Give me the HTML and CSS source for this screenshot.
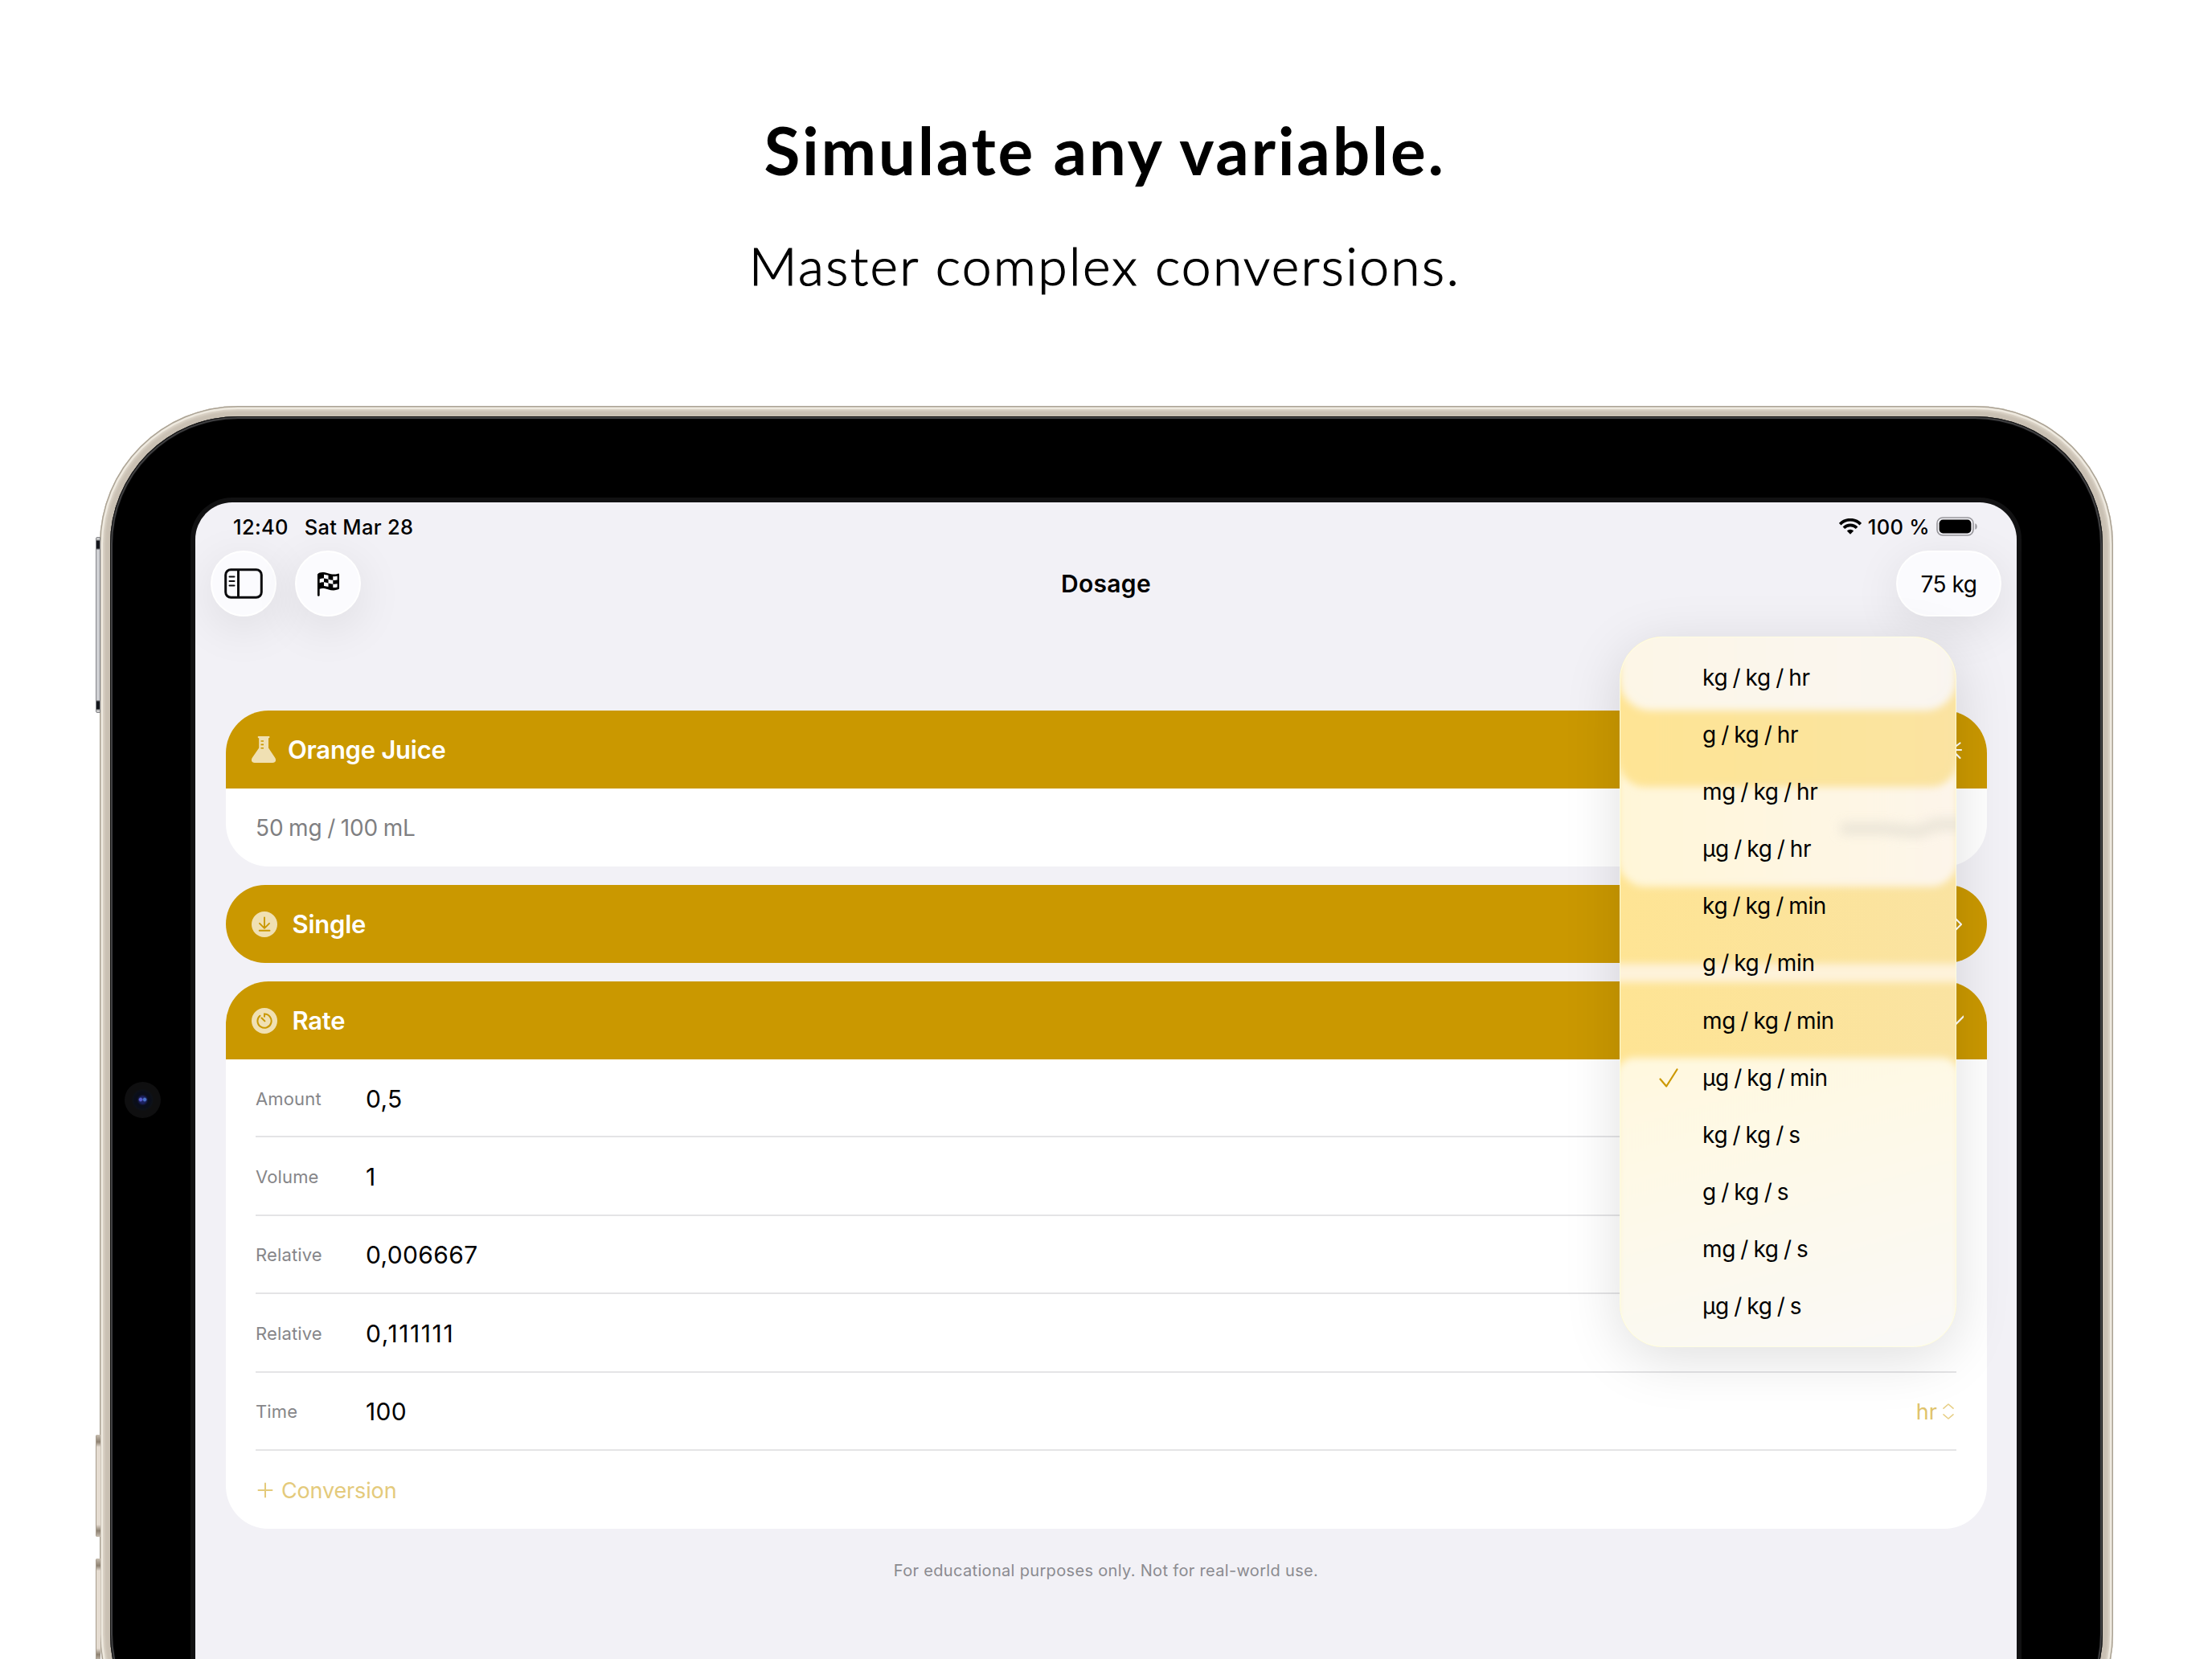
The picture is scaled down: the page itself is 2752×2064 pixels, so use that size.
FILE: index.html
```html
<!DOCTYPE html>
<html lang="en">
<head>
<meta charset="utf-8">
<title>Dosage</title>
<link rel="stylesheet" href="styles.css">
</head>
<body>
<header class="hero">
  <h1 class="hero-title">Simulate any variable.</h1>
  <p class="hero-sub">Master complex conversions.</p>
</header>

<main class="device">
  <span class="side-button power"></span>
  <span class="side-button volume-up"></span>
  <span class="side-button volume-down"></span>
  <span class="camera"></span>
  <div class="bezel">
    <div class="screen">
      <div class="statusbar">
        <span class="clock">12:40</span>
        <span class="date">Sat Mar 28</span>
        <svg class="wifi" viewBox="0 0 28 20" fill="none" stroke="#000" stroke-width="3.7"><path d="M1.2 7.2a17.6 17.6 0 0 1 25.6 0"/><path d="M5.900 11.700a11.300 11.300 0 0 1 16.200 0"/><path d="M14 19.800l-4.200-4.300a6 6 0 0 1 8.400 0z" fill="#000" stroke="none"/></svg>
        <span class="percent">100 %</span>
        <svg class="battery" viewBox="0 0 52 24"><rect x="1" y="1" width="45" height="22" rx="7" fill="none" stroke="#98979c" stroke-width="1.6"/><rect x="3.6" y="3.6" width="39.8" height="16.8" rx="4.6"/><path d="M48.4 8.200c3 1 3 6.600 0 7.600z" fill="#98979c"/></svg>
      </div>
      <nav class="toolbar">
        <button class="glass round"><svg class="i-sidebar" viewBox="0 0 48 38" fill="none" stroke="#0c0c0e" stroke-width="3"><rect x="1.700" y="1.700" width="44.600" height="34.600" rx="6.500"/><path d="M17.500 2v34"/><path d="M6.500 10.500h6M6.500 16h6M6.500 21.500h6" stroke-width="2" stroke-linecap="round"/></svg></button>
        <button class="glass round"><svg class="i-flag" viewBox="0 0 30 32"><path d="M1 3.500C4 .2 9 .5 14.500 2.300c5 1.600 9 1.700 13 .4q1.500-.3 1.500 1.300v17.200c0 1-.4 1.500-1.300 1.900-4 1.700-8.500 1.400-13.200-.1-4.500-1.400-8-1.700-10.700-.6V30.500q0 1.400-1.400 1.400T1 30.500z"/><g fill="#fbfbfe"><path d="M9.300 3.800q3 .3 5.700 1.200v5q-2.700-.9-5.700-1.200zM21 6.300q3 .3 5.500-.4v5q-2.500.6-5.500.3zM3.800 9.700q2.500-1.200 5.500-.9v5q-3-.3-5.500.8zM15 10q3 1 6 1.200v5q-3-.3-6-1.200zM9.300 13.800q3 .3 5.700 1.200v4.600q-2.700-.8-5.700-1.100zM21 16.200q3 .3 5.500-.4v4.300q-2.500.8-5.500.6z"/></g></svg></button>
        <h2 class="nav-title">Dosage</h2>
        <button class="glass weight">75 kg</button>
      </nav>

      <div class="content">
        <section class="card">
          <div class="card-head flask">
            <svg class="i-flask" viewBox="0 0 30 33"><path fill="#f0e0b3" d="M8.500 0h13.200q.8 0 .8 1t-.8 1.300H21V14.500l8.200 12.300c2 3.200.6 6.200-3 6.200H3.800c-3.600 0-5-3-3-6.200L9.200 14.500V2.300h-.7Q7.700 2 7.700 1t.8-1z"/><path d="M11.500 6h3.500M11.500 10.400h3.500M11.500 14.800h3.500" stroke="#ca9800" stroke-width="1.600"/></svg>
            <span>Orange Juice</span>
            <svg class="i-end" viewBox="0 0 32 32" fill="none" stroke="#fff" stroke-width="2.200" stroke-linecap="round"><path d="M16 3v6M16 23v6M3 16h6M23 16h6M6.800 6.800l4.200 4.200M21 19.500l6.500 6.500M27.500 7.500L21 12.500M11 21l-4.200 4.200"/></svg>
          </div>
          <div class="summary">50 mg / 100 mL</div>
        </section>

        <section class="card single">
          <div class="card-head">
            <svg class="i-round" viewBox="0 0 32 32" fill="none" stroke="#ca9800" stroke-width="1.900" stroke-linecap="round" stroke-linejoin="round"><circle cx="16" cy="16" r="16" fill="#f0e0b3" stroke="none"/><path d="M16 7.500v12.800M10 14.800l6 6 6-6M9.700 23.700h12.800"/></svg>
            <span>Single</span>
            <svg class="i-end" viewBox="0 0 32 32" fill="none" stroke="#fff" stroke-width="2.200" stroke-linecap="round" stroke-linejoin="round"><path d="M19.500 6.500l9.500 9.500-9.500 9.500"/></svg>
          </div>
        </section>

        <section class="card">
          <div class="card-head">
            <svg class="i-round" viewBox="0 0 32 32" fill="none" stroke="#ca9800" stroke-width="2" stroke-linecap="round"><circle cx="16" cy="16" r="16" fill="#f0e0b3" stroke="none"/><path d="M16 10.800V7.600a8.600 8.600 0 1 1-5.600 2.100M12.500 12.500l3.900 3.900"/></svg>
            <span>Rate</span>
            <svg class="i-end" viewBox="0 0 32 32" fill="none" stroke="#fff" stroke-width="2.200" stroke-linecap="round" stroke-linejoin="round"><path d="M10 10.500l11 11 11-11"/></svg>
          </div>
          <div class="rows">
            <div class="row"><span class="label">Amount</span><span class="value">0,5</span></div>
            <div class="row"><span class="label">Volume</span><span class="value">1</span></div>
            <div class="row"><span class="label">Relative</span><span class="value">0,006667</span></div>
            <div class="row"><span class="label">Relative</span><span class="value wide">0,111111</span></div>
            <div class="row"><span class="label">Time</span><span class="value">100</span><span class="unit">hr</span><svg class="i-updown" viewBox="0 0 16 22" fill="none" stroke="#e7cf86" stroke-width="1.600" stroke-linecap="round" stroke-linejoin="round"><path d="M2 7.200L8 2l6 5.200M2 14.800L8 20l6-5.200"/></svg></div>
            <div class="row add"><svg class="i-plus" viewBox="0 0 20 20" stroke="#e4ca7b" stroke-width="2" stroke-linecap="round"><path d="M1.500 10h17M10 1.500v17"/></svg><span>Conversion</span></div>
          </div>
        </section>
        <p class="footnote">For educational purposes only. Not for real-world use.</p>
      </div>

      <div class="menu">
        <svg class="menu-glass" viewBox="0 0 419 884" preserveAspectRatio="none">
          <defs>
            <filter id="soft" filterUnits="userSpaceOnUse" x="-60" y="-80" width="540" height="1100"><feGaussianBlur stdDeviation="5"/></filter>
            <filter id="smudge" filterUnits="userSpaceOnUse" x="200" y="180" width="260" height="120"><feGaussianBlur stdDeviation="7 6"/></filter>
            <linearGradient id="gold" x1="0" x2="1"><stop offset="0" stop-color="#fee494"/><stop offset="1" stop-color="#fae3a1"/></linearGradient>
            <linearGradient id="cream" x1="0" x2="1"><stop offset="0" stop-color="#fdf6e6"/><stop offset=".5" stop-color="#fbf6ec"/><stop offset="1" stop-color="#f9f5f0"/></linearGradient>
            <linearGradient id="pale" x1="0" x2="1"><stop offset="0" stop-color="#fff6d8"/><stop offset="1" stop-color="#fdf5ea"/></linearGradient>
            <linearGradient id="fade" x1="0" y1="0" x2=".3" y2="1"><stop offset="0" stop-color="#fff8de"/><stop offset=".5" stop-color="#fdf9ea"/><stop offset="1" stop-color="#faf9f6"/></linearGradient>
          </defs>
          <rect width="419" height="884" fill="url(#gold)"/>
          <rect x="-2" y="140" width="423" height="171" rx="34" fill="url(#pale)" filter="url(#soft)"/>
          <rect x="-2" y="40" width="423" height="147" rx="34" fill="url(#gold)" filter="url(#soft)"/>
          <rect x="0" y="-40" width="419" height="132" rx="38" fill="url(#cream)" filter="url(#soft)"/>
          <rect x="-20" y="407" width="459" height="23" fill="#fef3da" filter="url(#soft)"/>
          <rect x="-4" y="524" width="427" height="420" rx="22" fill="url(#fade)" filter="url(#soft)"/>
          <path d="M275 239h55l30 3h14l20-8h50" stroke="#e6e1d4" stroke-width="18" opacity=".65" fill="none" filter="url(#smudge)"/>
        </svg>
        <ul class="menu-list">
          <li>kg / kg / hr</li>
          <li>g / kg / hr</li>
          <li>mg / kg / hr</li>
          <li>µg / kg / hr</li>
          <li>kg / kg / min</li>
          <li>g / kg / min</li>
          <li>mg / kg / min</li>
          <li class="checked"><svg class="i-check" viewBox="0 0 24 24" fill="none" stroke="#cc9800" stroke-width="2.200" stroke-linecap="round" stroke-linejoin="round"><path d="M1.500 13.500L9.200 22.500 22.500 1.500"/></svg>µg / kg / min</li>
          <li>kg / kg / s</li>
          <li>g / kg / s</li>
          <li>mg / kg / s</li>
          <li>µg / kg / s</li>
        </ul>
      </div>
    </div>
  </div>
</main>
</body>
</html>
```
FILE: styles.css
```css
* { box-sizing: border-box; }

html { overflow: hidden; }

body {
  margin: 0;
  width: 2752px;
  height: 2064px;
  overflow: hidden;
  position: relative;
  background: #fff;
  color: #000;
  font-family: Inter, "Liberation Sans", sans-serif;
}

h1, h2, p, ul { margin: 0; padding: 0; }
button { border: 0; padding: 0; font: inherit; color: inherit; }
svg { display: block; flex: none; }

.hero {
  height: 505px;
  padding: 136px 3px 0 0;
  text-align: center;
  font-family: Lato, "Open Sans", sans-serif;
}
.hero-title { font-size: 82px; line-height: 100px; font-weight: 700; letter-spacing: 2.700px; }
.hero-sub {
  margin-top: 44px;
  font-size: 66px;
  line-height: 100px;
  font-weight: 300;
  letter-spacing: 2.350px;
  -webkit-text-stroke: 1.200px #000;
}

/* Tablet body */
.device {
  position: relative;
  width: 2505px;
  height: 1700px;
  margin-left: 124px;
  padding: 13px;
  border-radius: 172px;
  background: #c9c0b3;
  box-shadow: inset 0 0 0 1.500px #aaa294, inset 0 0 0 4px #eee9df, inset 0 0 3px 6px #ddd5c9;
}
.bezel {
  height: 100%;
  padding: 107px 107px 107px 106px;
  border-radius: 159px;
  background: #000;
  box-shadow: inset 0 0 0 1px #111, inset 0 0 1px 3px #444446;
}
.side-button {
  position: absolute;
  left: -5px;
  width: 6px;
  border-radius: 2px 0 0 2px;
  border-left: 1px solid #a79c8d;
  background: linear-gradient(#c9bfb2, #8d8171 7%, #e5dcd1 12%, #e5dcd1 88%, #8d8171 94%, #c9bfb2);
}
.power {
  top: 163px;
  height: 219px;
  border: 1px solid #85868a;
  background: linear-gradient(#ccc 1%, #15171c 2% 6%, #cfd0d3 7%, #cfd0d3 93%, #15171c 94% 98%, #ccc 99%);
}
.volume-up { top: 1280px; height: 127px; }
.volume-down { top: 1434px; height: 127px; }
.camera {
  position: absolute;
  left: 31px;
  top: 841px;
  width: 45px;
  height: 45px;
  border-radius: 50%;
  background:
    radial-gradient(circle at 20px 22px, #5a5fd0 0 1.500px, transparent 3px),
    radial-gradient(circle at 25px 22px, #4a74cc 0 1.500px, transparent 3px),
    radial-gradient(circle, #1c2160 0 4px, #0a0e1a 7px 10px, #0d1118 12px, #0f0f10 14px);
}
.screen {
  position: relative;
  height: 1500px;
  border-radius: 46px;
  background: #f2f1f6;
  box-shadow: 0 0 0 6px #111112;
}

/* Status bar */
.statusbar {
  display: flex;
  align-items: center;
  height: 60px;
  padding: 0 48px 0 47px;
  font-size: 25.500px;
  font-weight: 500;
  letter-spacing: .3px;
}
.date { margin-left: 20px; }
.wifi { width: 28px; height: 20px; margin-left: auto; }
.percent { margin: 0 8px; }
.battery { width: 52px; height: 24px; }

/* Toolbar */
.toolbar {
  display: flex;
  align-items: center;
  gap: 23px;
  height: 82px;
  padding: 0 19px;
}
.glass {
  display: flex;
  align-items: center;
  justify-content: center;
  height: 82px;
  background: #fbfbfe;
  border: 2px solid #fff;
  border-radius: 41px;
  box-shadow: 0 14px 60px rgba(0, 0, 0, .09);
}
.round { width: 82px; }
.i-sidebar { width: 48px; height: 38px; }
.i-flag { width: 29px; height: 31px; }
.nav-title { flex: 1; padding-right: 56px; text-align: center; font-size: 30px; font-weight: 600; letter-spacing: .3px; }
.weight { width: 131px; padding-top: 1px; font-size: 28px; letter-spacing: -.5px; }

/* Cards */
.content {
  display: flex;
  flex-direction: column;
  gap: 23px;
  padding: 117px 37.500px 0;
}
.card { overflow: hidden; border-radius: 53px; background: #fff; }
.single { border-radius: 49px; }
.card-head {
  display: flex;
  align-items: center;
  gap: 18.500px;
  height: 97px;
  padding: 0 29px 0 32.500px;
  background: #ca9800;
  color: #fff;
  font-size: 31px;
  font-weight: 600;
  letter-spacing: -.25px;
}
.flask { gap: 15px; }
.i-flask { width: 30px; height: 33px; }
.i-round { width: 32px; height: 32px; }
.i-end { width: 32px; height: 32px; margin-left: auto; }
.summary {
  display: flex;
  align-items: center;
  height: 97px;
  padding-left: 37.500px;
  color: #7f7f82;
  font-size: 28px;
  letter-spacing: -.1px;
  word-spacing: -1.200px;
}
.rows { padding: 0 37.500px; }
.row {
  display: flex;
  align-items: center;
  height: 97.400px;
  padding-top: 2px;
  border-bottom: 2px solid #e4e4e6;
}
.label { width: 137px; color: #868689; font-size: 22px; letter-spacing: .15px; }
.value { font-size: 30px; letter-spacing: .35px; }
.value.wide { letter-spacing: 1.600px; }
.unit { margin-left: auto; color: #e0c36b; font-size: 27px; }
.i-updown { width: 16px; height: 22px; margin: 0 2px 0 6px; }
.add { border-bottom: 0; gap: 10px; padding: 1px 0 0 2px; color: #e4ca7b; font-size: 27px; letter-spacing: -.15px; }
.i-plus { width: 20px; height: 20px; }
.footnote {
  margin-top: 17px;
  text-align: center;
  color: #8b8b90;
  font-size: 20px;
  line-height: 24px;
  letter-spacing: .330px;
}

/* Unit menu */
.menu {
  position: absolute;
  left: 1772px;
  top: 167px;
  width: 419px;
  height: 884px;
  padding: 15px 0;
  border-radius: 54px;
  box-shadow: 0 14px 70px rgba(0, 0, 0, .13);
}
.menu-glass {
  position: absolute;
  inset: 0;
  width: 100%;
  height: 100%;
  border-radius: 54px;
}
.menu::after {
  content: "";
  position: absolute;
  inset: 0;
  border: 1.500px solid rgba(255, 255, 225, .85);
  border-radius: 54px;
}
.menu-list {
  position: relative;
  list-style: none;
  font-size: 28px;
  letter-spacing: -.35px;
  word-spacing: -1.200px;
}
.menu-list li {
  display: flex;
  align-items: center;
  height: 71.170px;
  padding-left: 103px;
  white-space: nowrap;
}
.menu-list .checked { padding-left: 49px; }
.i-check { width: 24px; height: 24px; margin-right: 30px; }
```
